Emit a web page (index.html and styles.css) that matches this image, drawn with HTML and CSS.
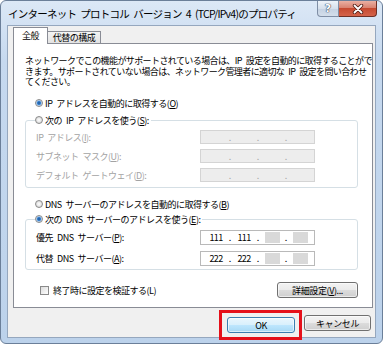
FILE: index.html
```html
<!DOCTYPE html>
<html>
<head>
  <meta charset="utf-8">
  <title>インターネット プロトコル バージョン 4 (TCP/IPv4)のプロパティ</title>
  <link rel="stylesheet" href="styles.css">
</head>
<body>
  <div class="window">
    <div class="titlebar">
      <span class="title">インターネット プロトコル バージョン 4 (TCP/IPv4)のプロパティ</span>
      <div class="caption-buttons">
        <span class="cap-btn help">?</span>
        <span class="cap-btn close">
          <svg width="12" height="10" viewBox="0 0 12 10">
            <path d="M2.5 1.5 L9.5 8.5 M9.5 1.5 L2.5 8.5" stroke="#4e1a12" stroke-width="3.4" stroke-linecap="round"/>
            <path d="M2.5 1.5 L9.5 8.5 M9.5 1.5 L2.5 8.5" stroke="#ffffff" stroke-width="1.8" stroke-linecap="round"/>
          </svg>
        </span>
      </div>
    </div>

    <div class="face">
      <div class="tabs">
        <span class="tab active">全般</span>
        <span class="tab">代替の構成</span>
      </div>

      <div class="panel">
        <p class="intro">ネットワークでこの機能がサポートされている場合は、IP 設定を自動的に取得することがで<br>きます。サポートされていない場合は、ネットワーク管理者に適切な IP 設定を問い合わせ<br>てください。</p>

        <div class="option first"><span class="radio checked"></span>IP アドレスを自動的に取得する(<u>O</u>)</div>

        <fieldset class="group ip-group">
          <legend><span class="radio"></span>次の IP アドレスを使う(<u>S</u>):</legend>
          <div class="field-row disabled">
            <span class="field-label">IP アドレス(<u>I</u>):</span>
            <span class="ipfield"><span class="octet"></span><span class="dot">.</span><span class="octet"></span><span class="dot">.</span><span class="octet"></span><span class="dot">.</span><span class="octet"></span></span>
          </div>
          <div class="field-row disabled">
            <span class="field-label">サブネット マスク(<u>U</u>):</span>
            <span class="ipfield"><span class="octet"></span><span class="dot">.</span><span class="octet"></span><span class="dot">.</span><span class="octet"></span><span class="dot">.</span><span class="octet"></span></span>
          </div>
          <div class="field-row disabled">
            <span class="field-label">デフォルト ゲートウェイ(<u>D</u>):</span>
            <span class="ipfield"><span class="octet"></span><span class="dot">.</span><span class="octet"></span><span class="dot">.</span><span class="octet"></span><span class="dot">.</span><span class="octet"></span></span>
          </div>
        </fieldset>

        <div class="option dns-auto"><span class="radio"></span>DNS サーバーのアドレスを自動的に取得する(<u>B</u>)</div>

        <fieldset class="group dns-group">
          <legend><span class="radio checked"></span>次の DNS サーバーのアドレスを使う(<u>E</u>):</legend>
          <div class="field-row tall">
            <span class="field-label">優先 DNS サーバー(<u>P</u>):</span>
            <span class="ipfield"><span class="octet">111</span><span class="dot">.</span><span class="octet">111</span><span class="dot">.</span><span class="octet"><span class="mask"></span></span><span class="dot">.</span><span class="octet"><span class="mask"></span></span></span>
          </div>
          <div class="field-row tall">
            <span class="field-label">代替 DNS サーバー(<u>A</u>):</span>
            <span class="ipfield"><span class="octet">222</span><span class="dot">.</span><span class="octet">222</span><span class="dot">.</span><span class="octet"><span class="mask"></span></span><span class="dot">.</span><span class="octet"><span class="mask"></span></span></span>
          </div>
        </fieldset>

        <div class="bottom-row">
          <div class="check-option"><span class="checkbox"></span>終了時に設定を検証する(L)</div>
          <button class="btn advanced">詳細設定(<u>V</u>)...</button>
        </div>
      </div>

      <div class="footer">
        <span class="highlight"><button class="btn default">OK</button></span>
        <button class="btn cancel">キャンセル</button>
      </div>
    </div>
  </div>
</body>
</html>
```

FILE: styles.css
```css
* {
  box-sizing: border-box;
}
html, body {
  margin: 0;
}
body {
  font-family: "Noto Sans CJK JP", "Noto Sans", sans-serif;
  font-size: 9px;
  color: #000;
  background: #ffffff;
  word-spacing: 2.5px;
}
u {
  text-decoration: underline;
  text-underline-offset: 1px;
}

/* window frame */
.window {
  width: 383px;
  height: 344px;
  border: 1px solid #6b7f99;
  border-radius: 6px;
  padding: 0 6px 5px;
  background: linear-gradient(#dce8f6, #c6d9ef 60px, #bcd2eb);
}
.titlebar {
  height: 24px;
  display: flex;
  justify-content: space-between;
}
.title {
  align-self: center;
  padding-left: 1px;
  font-size: 10.5px;
  letter-spacing: -0.75px;
}
.caption-buttons {
  display: flex;
  margin-right: -1px;
}
.cap-btn {
  height: 16px;
  display: flex;
  align-items: center;
  justify-content: center;
}
.help {
  width: 22px;
  border: 1px solid #7f8ea5;
  border-top: none;
  border-radius: 0 0 0 4px;
  background: linear-gradient(#eef3f9, #d6e0ec 50%, #c4d1e2 51%, #d3deeb);
  color: #ffffff;
  font-family: "DejaVu Sans", sans-serif;
  font-weight: bold;
  font-size: 11px;
  text-shadow: 0 0 1px #3b4a60, 0 0 1px #3b4a60, 0 0 1px #3b4a60;
}
.close {
  width: 38px;
  border: 1px solid #6e2f25;
  border-top: none;
  border-left: none;
  border-radius: 0 0 4px 0;
  background: linear-gradient(#eab0a3, #d98270 45%, #c64a31 50%, #d4634a);
}

/* dialog face */
.face {
  height: 313px;
  background: #f0f0f0;
  border: 1px solid #95a7be;
  padding: 1px 3px 0 5px;
}
.tabs {
  display: flex;
  align-items: flex-end;
  height: 17px;
  margin-bottom: -1px;
}
.tab {
  height: 12px;
  margin-bottom: 1px;
  width: 53px;
  border: 1px solid #898c95;
  border-left: none;
  border-bottom: none;
  background: linear-gradient(#f4f4f4, #e2e2e2);
  display: flex;
  align-items: center;
  justify-content: center;
  letter-spacing: -0.5px;
}
.tab.active {
  position: relative;
  z-index: 1;
  width: 35px;
  height: 17px;
  margin-bottom: 0;
  border-left: 1px solid #898c95;
  background: #ffffff;
  padding-bottom: 2px;
}
.panel {
  width: 360px;
  height: 265px;
  border: 1px solid #898c95;
  background: #ffffff;
  padding: 0 0 0 11px;
}
.intro {
  margin: 12px 0 0;
  line-height: 10.5px;
  white-space: nowrap;
  letter-spacing: -0.6px;
}

/* radio options */
.option, legend, .check-option {
  display: flex;
  align-items: center;
  height: 14px;
  white-space: nowrap;
  letter-spacing: -0.5px;
}
.option {
  padding-left: 10px;
}
.option.first {
  margin-top: 8.5px;
}
.option.dns-auto {
  margin-top: 9px;
}
.radio {
  width: 8px;
  height: 8px;
  margin-right: 2px;
  border-radius: 50%;
  border: 1px solid #8a8a8a;
  background: radial-gradient(circle, #ffffff 0, #e9e9e9 2px, #cfcfcf 4px);
  flex: none;
}
.radio.checked {
  background: radial-gradient(circle, #174f90 0, #3b82cf 1.6px, #b7d3f0 2.6px, #e7eef7 4px);
}

/* group boxes */
.group {
  width: 333px;
  margin: 3px 0 0;
  padding: 3px 0 5px 10px;
  border: 1px solid #d5dfe5;
  border-radius: 3px;
  min-width: 0;
}
.dns-group {
  margin-top: 1px;
  padding: 4px 0 3px 10px;
}
legend {
  margin-left: -1px;
  padding: 0 2px 0 0;
}
.field-row {
  display: flex;
  align-items: center;
  height: 14px;
  white-space: nowrap;
  letter-spacing: -0.5px;
}
.field-row + .field-row {
  margin-top: 5px;
}
.field-row.tall {
  height: 15px;
}
.field-row.tall + .field-row.tall {
  margin-top: 6px;
}
.field-label {
  width: 164px;
}
.disabled .field-label {
  color: #a3a3a3;
}
.ipfield {
  width: 115px;
  height: 100%;
  display: flex;
  align-items: center;
  padding-left: 4px;
  border: 1px solid #b9b9b9;
  background: #ffffff;
  letter-spacing: 0;
  word-spacing: 0;
}
.disabled .ipfield {
  border-color: #d4d4d4;
  background: #ededed;
  color: #a8a8a8;
}
.octet {
  width: 22px;
  display: flex;
  justify-content: center;
  letter-spacing: -0.6px;
}
.dot {
  width: 6px;
  text-align: center;
}
.mask {
  width: 15px;
  height: 11px;
  background: #d9d9d9;
}

/* bottom row */
.bottom-row {
  display: flex;
  justify-content: space-between;
  align-items: center;
  height: 16px;
  margin-top: 12px;
  padding: 0 14px 0 15px;
}
.checkbox {
  width: 9px;
  height: 9px;
  margin-right: 4px;
  border: 1px solid #8a8a8a;
  background: linear-gradient(135deg, #dcdcdc, #ffffff);
}
.btn {
  font: inherit;
  letter-spacing: -0.4px;
  height: 16px;
  padding: 0;
  color: #000;
  border: 1px solid #707070;
  border-radius: 3px;
  background: linear-gradient(#f3f3f3, #ebebeb 48%, #dcdcdc 52%, #cfcfcf);
  box-shadow: inset 0 0 0 1px rgba(255, 255, 255, 0.6);
}
.advanced {
  width: 81px;
}

/* footer buttons */
.footer {
  display: flex;
  justify-content: flex-end;
  align-items: flex-start;
  gap: 2px;
  padding-right: 1px;
}
.highlight {
  width: 83px;
  height: 30px;
  margin-top: 2px;
  border: 3px solid #e5101a;
  padding: 4px 0 0 5px;
}
.btn.default {
  width: 68px;
  border-color: #3c7fb1;
  background: linear-gradient(#eaf6fd, #d9f0fc 48%, #bee6fd 52%, #a7d9f5);
}
.cancel {
  width: 67px;
  margin-top: 7px;
}
```
